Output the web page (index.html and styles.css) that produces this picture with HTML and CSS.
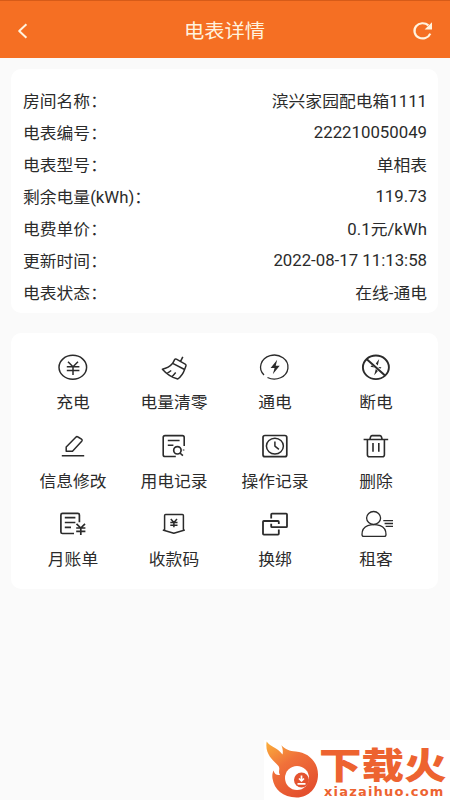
FILE: index.html
```html
<!DOCTYPE html>
<html lang="zh-CN">
<head>
<meta charset="utf-8">
<meta name="viewport" content="width=device-width, initial-scale=1">
<title>电表详情</title>
<link rel="stylesheet" href="styles.css">
</head>
<body>
<header class="bar">
  <svg class="bar-icon" viewBox="0 0 24 24"><path d="M15.4 5.2 8.2 12l7.2 6.8" stroke-width="2"/></svg>
  <h1 class="bar-title">电表详情</h1>
  <svg class="bar-icon" viewBox="0 0 24 24"><path d="M20.3 14.6A8.2 7.6 0 1 1 18.4 6.4" stroke-width="2.2"/><path class="solid" d="M22 3.2v7.2h-7.4z"/></svg>
</header>
<main>
  <dl class="card info">
    <div class="row"><dt>房间名称：</dt><dd>滨兴家园配电箱1111</dd></div>
    <div class="row"><dt>电表编号：</dt><dd class="numeric">222210050049</dd></div>
    <div class="row"><dt>电表型号：</dt><dd>单相表</dd></div>
    <div class="row"><dt>剩余电量(kWh)：</dt><dd class="numeric">119.73</dd></div>
    <div class="row"><dt>电费单价：</dt><dd>0.1元/kWh</dd></div>
    <div class="row"><dt>更新时间：</dt><dd class="numeric">2022-08-17 11:13:58</dd></div>
    <div class="row"><dt>电表状态：</dt><dd>在线-通电</dd></div>
  </dl>
  <nav class="card actions">
    <a class="action"><svg viewBox="0 0 40 32"><ellipse cx="19.8" cy="16.3" rx="13.8" ry="12"/><path d="M15 10.8l5 5 5-5M13.8 15.8h12.6M13.8 19.6h12.6M20 15.8v8.2"/></svg><span>充电</span></a>
    <a class="action"><svg viewBox="0 0 40 32"><path d="M28.8 5.8l-2.6 5.4M20.6 8.6q.6-1 1.8-.4l8.8 4.9q1.2.7.8 1.7l-1.4 3.7-11.9-6.2zM18.7 12.3Q14.8 17 8.4 18.2q6.2 7.2 15.4 9.8 4.8-3.6 6.8-9.5M13.2 22.3l4-2.8M18.3 25.4l3.4-3.8"/></svg><span>电量清零</span></a>
    <a class="action"><svg viewBox="0 0 40 32"><path d="M9 24A13.7 12 0 1 1 12.5 26.5" stroke-width="1.3"/><path class="solid" d="M22.2 8.7 15.6 17h4l-1.8 6.3 6.9-8.6h-4z"/></svg><span>通电</span></a>
    <a class="action"><svg viewBox="0 0 40 32"><ellipse cx="19.9" cy="16.3" rx="13" ry="11.8" stroke-width="1.9"/><path d="M10.8 8.2l18.5 16.5" stroke-width="2"/><path class="solid" d="M23.2 8l-3.4 4.5 2 1.9zM18.2 24.3l3.7-4.4-2.1-2zM14.5 15.8l1.4-1.5 2.7 2.2zM25.5 16.2l-1.3 1.6-2-1.7z"/></svg><span>断电</span></a>

    <a class="action"><svg viewBox="0 0 40 32"><path d="M8.8 25.7h22.4M13.2 21.2V17l9.6-9.8q1-1 2.2-.2l3.5 2.2q1.2.8.2 2l-9.2 10z"/></svg><span>信息修改</span></a>
    <a class="action"><svg viewBox="0 0 40 32"><path d="M21.8 26.5H11q-1.8 0-1.8-1.8V7.4q0-1.8 1.8-1.8h17.4q1.8 0 1.8 1.8V16M13.8 10.5h11.8M13.8 15.3h5.6M25.9 23l3 2.7M29.6 19.4v1.2" stroke-width="1.6"/><circle cx="23.4" cy="20.3" r="3.7" stroke-width="1.7"/></svg><span>用电记录</span></a>
    <a class="action"><svg viewBox="0 0 40 32"><rect x="8" y="5.5" width="23.8" height="21.2" rx="2" stroke-width="1.7"/><ellipse cx="19.9" cy="16.1" rx="8.5" ry="7.9"/><path d="M19.9 11.5v4.6l4 3.2"/></svg><span>操作记录</span></a>
    <a class="action"><svg viewBox="0 0 40 32"><path d="M7.6 9.5h24.6M13.8 9.4l.8-2.6q.4-1.2 1.4-1.2h8q1 0 1.4 1.2l.8 2.6M11.4 9.8v14.9q0 2 2 2h13q2 0 2-2V9.8M17 13v8.8M22.8 13v8.8" stroke-width="1.6"/></svg><span>删除</span></a>

    <a class="action"><svg viewBox="0 0 40 32"><path d="M21 25.5H9.5q-1.6 0-1.6-1.6V7q0-1.6 1.6-1.6h15.3q1.6 0 1.6 1.6v7.2M11.8 9.7h10.6M11.8 14.5h10.6M11.8 19.3h6.2M23.5 15.8l4.3 4.2 4.2-4.2M23.2 20h9.2M23.2 23.4h9.2M27.8 20v7" stroke-width="1.7"/></svg><span>月账单</span></a>
    <a class="action"><svg viewBox="0 0 40 32"><path d="M10.6 22V7.5q0-1 1-1h16.8q1 0 1 1V22M8.8 22l11 3.2 11-3.2"/><path d="M16.8 11l3.1 3.4 3.1-3.4M16.3 14.6h7.2M16.3 17.2h7.2M19.9 14.6v4.7"/></svg><span>收款码</span></a>
    <a class="action"><svg viewBox="0 0 40 32"><path d="M16.2 10.6V6.4q0-.8.8-.8h14.2q.8 0 .8.8v12q0 .8-.8.8H17q-.8 0-.8-.8v-2.6M23.8 16v-2.2q0-.8-.8-.8H8.8q-.8 0-.8.8v12q0 .8.8.8H23q.8 0 .8-.8v-4.4" stroke-width="1.8"/></svg><span>换绑</span></a>
    <a class="action"><svg viewBox="0 0 40 32"><g stroke-width="1.3"><ellipse cx="17.6" cy="10" rx="7" ry="6.5"/><path d="M11.8 17.7q-5.8 2.2-5.8 8.8 0 1.9 1.8 1.9h20.4q1.8 0 1.8-1.9 0-6.6-5.8-8.8-6.4-2-12.4 0M27.3 12.6H37M28.6 15.5H37M29.6 18.3H37"/></g></svg><span>租客</span></a>
  </nav>
</main>
<aside class="mark">
  <svg class="flame" viewBox="0 0 56 60">
    <defs><linearGradient id="fire" x1="0" y1="0" x2=".6" y2="1"><stop offset="0" stop-color="#fbb03c"/><stop offset=".45" stop-color="#f0713a"/><stop offset="1" stop-color="#e4502e"/></linearGradient></defs>
    <path fill="url(#fire)" d="M2.7 1.5C6 7 13 7 18.5 14.5c.7-3 .3-6-1.2-9.2 4.5 4.5 8 5.7 14.5 6.2C44.5 12.500 54 22 54 34.500 54 47.500 45 57.500 32.500 57.500 19 57.500 10 49 8.500 38.500 8 35 8.500 33 9.500 30.500c1 3.500 3 5 6.500 4.500-2.500-4 1-6-2-9.500C9 20 .5 14 2.700 1.500z"/>
    <circle cx="33" cy="38" r="12" fill="#fff"/><circle cx="37.5" cy="40" r="7.500" fill="#e4532f"/>
    <path d="M37.500 35.500v5M35 38.500l2.500 2.500 2.500-2.500M33.500 43.800h8" fill="none" stroke="#fff" stroke-width="1.700"/>
  </svg>
  <div class="mark-text"><strong>下载火</strong><span>xiazaihuo.com</span></div>
</aside>
</body>
</html>
```

FILE: styles.css
```css
* { box-sizing: border-box; }
body {
  margin: 0;
  height: 800px;
  overflow: hidden;
  background: #fafafa;
  color: #2b2b2b;
  font: 16.8px/24px Roboto, "Noto Sans CJK SC", sans-serif;
}
svg { fill: none; stroke: currentColor; stroke-width: 1.5; stroke-linejoin: round; }
.solid { fill: currentColor; stroke: none; }
.bar {
  height: 58px;
  padding: 2px 16px 0 11px;
  display: flex;
  align-items: center;
  justify-content: space-between;
  background: #f56f23;
  border-top: 1px solid #d65b18;
  color: #fff3df;
}
.bar-icon { width: 24px; height: 24px; }
.bar-title { margin: 0 0 0 4px; font-size: 20.3px; font-weight: 400; transform: scaleY(.95); }
main { padding: 11px 12px 0 11px; }
.card { margin: 0; background: #fff; border-radius: 10px; }
.info { height: 244px; padding: 16px 11px 0 12px; }
.row { height: 32px; display: flex; align-items: center; justify-content: space-between; }
.row dt, .row dd { margin: 0; white-space: nowrap; transform: scaleY(.94); }
.row dt { width: 140px; }
.row .numeric { padding-bottom: 2px; }
.actions {
  height: 256px;
  margin-top: 20px;
  padding: 18px 12px 0 11.5px;
  display: grid;
  grid-template-columns: repeat(4, 101px);
  grid-auto-rows: 78.5px;
}
.action { display: flex; flex-direction: column; align-items: center; gap: 7px; }
.action svg { width: 40px; height: 32px; }
.action span { white-space: nowrap; transform: scaleY(.94); }
.mark {
  position: absolute;
  right: 0;
  bottom: 0;
  width: 186px;
  height: 60px;
  display: flex;
  background: #fff;
}
.flame { width: 56px; height: 60px; stroke: none; flex: none; }
.mark-text { flex: 1; color: #ed6330; }
.mark-text strong {
  display: block;
  height: 45px;
  margin-left: -1px;
  padding-top: 5px;
  font: 900 42.5px/38px "Noto Sans CJK SC", sans-serif;
  white-space: nowrap;
  transform: scaleY(.86);
}
.mark-text span {
  display: block;
  padding-left: 4px;
  font: 700 13px/14px "DejaVu Sans", sans-serif;
  letter-spacing: 1.2px;
}
```
